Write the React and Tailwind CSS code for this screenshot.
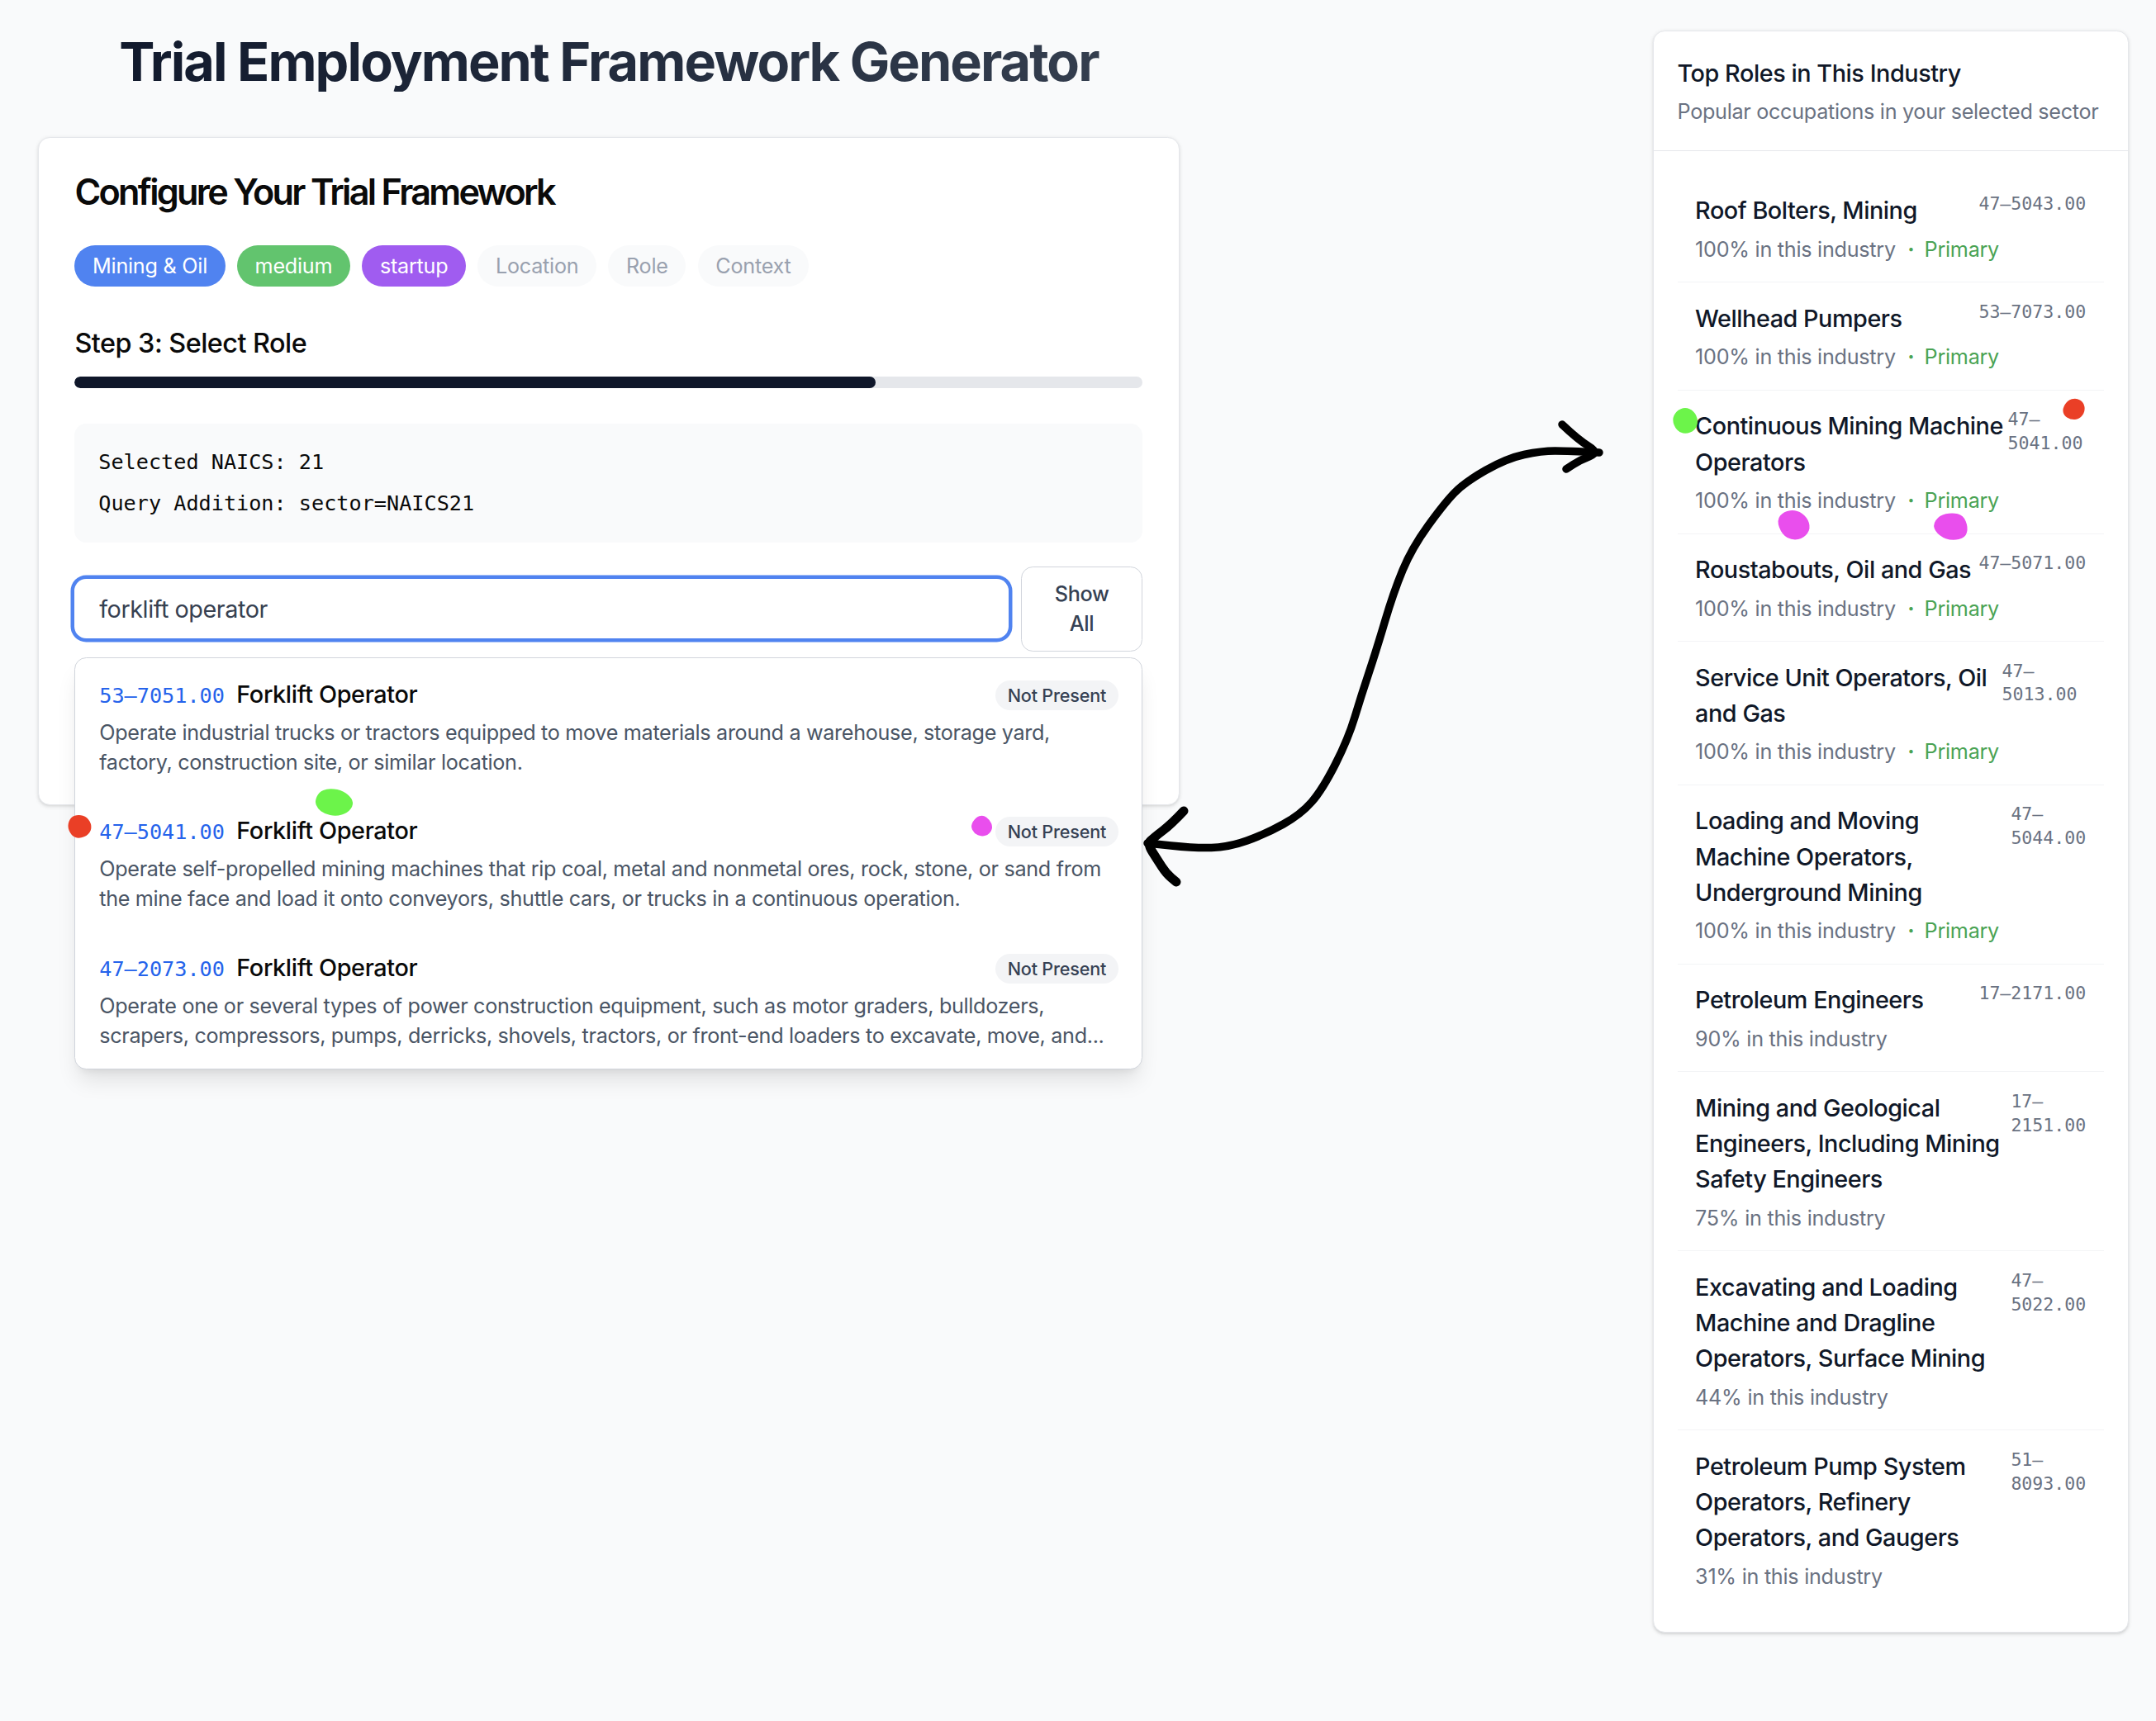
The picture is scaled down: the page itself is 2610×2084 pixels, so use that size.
import React from "react";

const chips = [
  ["Mining & Oil", "bg-[#5083f0] text-white"],
  ["medium", "bg-[#62c46e] text-white"],
  ["startup", "bg-[#a05cf0] text-white"],
  ["Location", "bg-gray-50 text-gray-400"],
  ["Role", "bg-gray-50 text-gray-400"],
  ["Context", "bg-gray-50 text-gray-400"],
];

const results = [
  ["53–7051.00", "Operate industrial trucks or tractors equipped to move materials around a warehouse, storage yard, factory, construction site, or similar location."],
  ["47–5041.00", "Operate self-propelled mining machines that rip coal, metal and nonmetal ores, rock, stone, or sand from the mine face and load it onto conveyors, shuttle cars, or trucks in a continuous operation."],
  ["47–2073.00", "Operate one or several types of power construction equipment, such as motor graders, bulldozers, scrapers, compressors, pumps, derricks, shovels, tractors, or front-end loaders to excavate, move, and..."],
];

const roles = [
  ["Roof Bolters, Mining", "47–5043.00", "100%", true],
  ["Wellhead Pumpers", "53–7073.00", "100%", true],
  ["Continuous Mining Machine Operators", "47–5041.00", "100%", true],
  ["Roustabouts, Oil and Gas", "47–5071.00", "100%", true],
  ["Service Unit Operators, Oil and Gas", "47–5013.00", "100%", true],
  ["Loading and Moving Machine Operators, Underground Mining", "47–5044.00", "100%", true],
  ["Petroleum Engineers", "17–2171.00", "90%", false],
  ["Mining and Geological Engineers, Including Mining Safety Engineers", "17–2151.00", "75%", false],
  ["Excavating and Loading Machine and Dragline Operators, Surface Mining", "47–5022.00", "44%", false],
  ["Petroleum Pump System Operators, Refinery Operators, and Gaugers", "51–8093.00", "31%", false],
];

function smooth(p) {
  let d = `M${p[0][0]} ${p[0][1]}`;
  for (let i = 1; i < p.length - 1; i++) {
    const mx = (p[i][0] + p[i + 1][0]) / 2;
    const my = (p[i][1] + p[i + 1][1]) / 2;
    d += ` Q${p[i][0]} ${p[i][1]} ${mx} ${my}`;
  }
  const l = p[p.length - 1];
  return d + ` L${l[0]} ${l[1]}`;
}

function blob(p, ox, oy) {
  const q = p.map(([x, y]) => [x / 3 + ox, y / 3 + oy]);
  const n = q.length;
  const mid = (a, b) => [(a[0] + b[0]) / 2, (a[1] + b[1]) / 2];
  const s = mid(q[n - 1], q[0]);
  let d = `M${s[0]} ${s[1]}`;
  for (let i = 0; i < n; i++) {
    const m = mid(q[i], q[(i + 1) % n]);
    d += ` Q${q[i][0]} ${q[i][1]} ${m[0]} ${m[1]}`;
  }
  return d + " Z";
}

const curve = [[1936,548],[1899,546],[1866,546],[1824,555],[1773,584],[1748,610],[1709,664],[1687,717],[1666,788],[1648,842],[1632,895],[1601,956],[1575,986],[1532,1010],[1487,1026],[1446,1027],[1389,1021]];
const headL = [[1433,982],[1418,998],[1397,1014],[1389,1022],[1401,1041],[1412,1058],[1424,1068]];
const headR = [[1891,514],[1911,533],[1936,548],[1913,557],[1896,568]];

const blobs = [
  [[[18,60],[33,28],[65,14],[112,19],[148,43],[160,72],[138,103],[95,116],[53,106],[28,87]], 375, 950, "#6cf44a"],
  [[[19,60],[32,28],[60,19],[92,27],[110,62],[98,92],[62,108],[33,95]], 75, 980, "#ea3f26"],
  [[[29,60],[48,30],[75,20],[100,38],[111,65],[98,91],[70,100],[43,88]], 1165, 980, "#e94eed"],
  [[[12,115],[28,82],[60,69],[92,82],[108,118],[97,153],[60,168],[28,153]], 2020, 470, "#6cf44a"],
  [[[1430,75],[1448,45],[1480,35],[1508,52],[1513,85],[1492,113],[1460,115],[1436,100]], 2020, 470, "#ea3f26"],
  [[[392,480],[418,447],[465,442],[503,468],[516,510],[492,545],[450,553],[412,533]], 2020, 470, "#e94eed"],
  [[[957,500],[983,462],[1030,452],[1070,462],[1088,505],[1078,543],[1030,555],[983,538]], 2020, 470, "#e94eed"],
];

function Marks() {
  return (
    <svg className="absolute left-0 top-0 pointer-events-none" width="2610" height="2084" viewBox="0 0 2610 2084" fill="none">
      <g stroke="#000" strokeWidth="9.5" strokeLinecap="round" strokeLinejoin="round">
        <path d={smooth(curve)} />
        <path d={smooth(headL)} strokeWidth="11" />
        <path d={smooth(headR)} />
      </g>
      {blobs.map(([p, ox, oy, c], i) => (
        <path key={i} d={blob(p, ox, oy)} fill={c} />
      ))}
    </svg>
  );
}

export default function App() {
  return (
    <div className="relative w-[2610px] h-[2084px] overflow-hidden bg-[#f9fafb]">
      <div className="[zoom:1.8] w-[1450px] h-[1157.7px] flex justify-between pl-[25.7px] pr-[18.5px] font-[Inter,sans-serif] text-[#0a0a0a]">
        <main className="w-[767.4px] pt-[21.6px]">
          <h1 className="text-4xl font-bold tracking-[-0.03em] text-center mb-[30.6px] bg-linear-to-r from-[#0f172a] to-[#374151] bg-clip-text text-transparent">
            Trial Employment Framework Generator
          </h1>
          <section className="h-[449.5px] rounded-lg border border-gray-200 bg-white shadow-sm p-6">
            <h2 className="text-2xl font-semibold leading-none tracking-[-0.063em] mb-[23.5px] pt-[0.5px]">Configure Your Trial Framework</h2>
            <div className="flex gap-2 mb-6">
              {chips.map(([t, c]) => (
                <span key={t} className={`px-3 py-1 rounded-full text-sm tracking-[-0.14px] ${c}`}>{t}</span>
              ))}
            </div>
            <h3 className="text-lg font-medium tracking-[-0.29px] mb-2 pt-[0.4px]">Step 3: Select Role</h3>
            <div className="h-2 rounded-full bg-gray-200 overflow-hidden mb-6">
              <div className="h-full w-3/4 rounded-full bg-[#0f172a]" />
            </div>
            <div className="rounded-lg bg-gray-50 p-4 mb-4 text-sm font-['DejaVu_Sans_Mono',monospace]">
              <p className="mb-2">Selected NAICS: 21</p>
              <p>Query Addition: sector=NAICS21</p>
            </div>
            <div className="relative">
              <div className="flex items-center gap-2">
                <div className="flex-1 h-10 flex items-center px-4 rounded-lg bg-white border border-transparent ring-[2.5px] ring-[#5083f0] text-base tracking-[-0.25px] text-[#374151]">forklift operator</div>
                <button className="w-[82px] px-4 py-2 rounded-lg border border-gray-300 bg-white text-sm font-medium tracking-[-0.19px] text-gray-700 text-center">Show All</button>
              </div>
              <div className="absolute left-0 right-0 top-full mt-1 rounded-lg border border-gray-300 bg-white shadow-lg">
                {results.map(([code, desc]) => (
                  <div key={code} className="px-4 py-3">
                    <div className="flex items-center justify-between h-6 mb-1">
                      <div className="flex items-baseline">
                        <span className="text-sm text-[#2563eb] font-['DejaVu_Sans_Mono',monospace]">{code}</span>
                        <span className="ml-2 text-base font-medium tracking-[-0.2px]">Forklift Operator</span>
                      </div>
                      <span className="px-2 py-0.5 mt-[2px] rounded-full bg-gray-100 text-xs font-medium tracking-[-0.1px] text-gray-700">Not Present</span>
                    </div>
                    <p className="text-sm tracking-[-0.18px] text-gray-600">{desc}</p>
                  </div>
                ))}
              </div>
            </div>
          </section>
        </main>
        <aside className="w-80 mt-[20.5px] h-[1078px] rounded-lg border border-gray-200 bg-white shadow-sm">
          <div className="p-4 border-b border-gray-200">
            <h2 className="text-base font-medium tracking-[-0.25px] text-gray-900">Top Roles in This Industry</h2>
            <p className="mt-1 text-sm tracking-[-0.17px] text-gray-500">Popular occupations in your selected sector</p>
          </div>
          <div className="p-4">
            {roles.map(([name, code, pct, primary], i) => (
              <div key={code} className={`px-3 py-3 ${i < roles.length - 1 ? "border-b border-gray-100" : ""}`}>
                <div className="flex items-start justify-between gap-0.5">
                  <span className="text-base font-medium tracking-[-0.26px] text-gray-900">{name}</span>
                  <span className="text-xs text-gray-500 font-['DejaVu_Sans_Mono',monospace]">{code}</span>
                </div>
                <div className="mt-1 text-sm tracking-[-0.15px] text-gray-500">
                  {pct} in this industry
                  {primary && (
                    <span className="ml-2 text-[#4aa354]">
                      <span className="font-bold">·</span>
                      <span className="ml-[3px]"> Primary</span>
                    </span>
                  )}
                </div>
              </div>
            ))}
          </div>
        </aside>
      </div>
      <Marks />
    </div>
  );
}
